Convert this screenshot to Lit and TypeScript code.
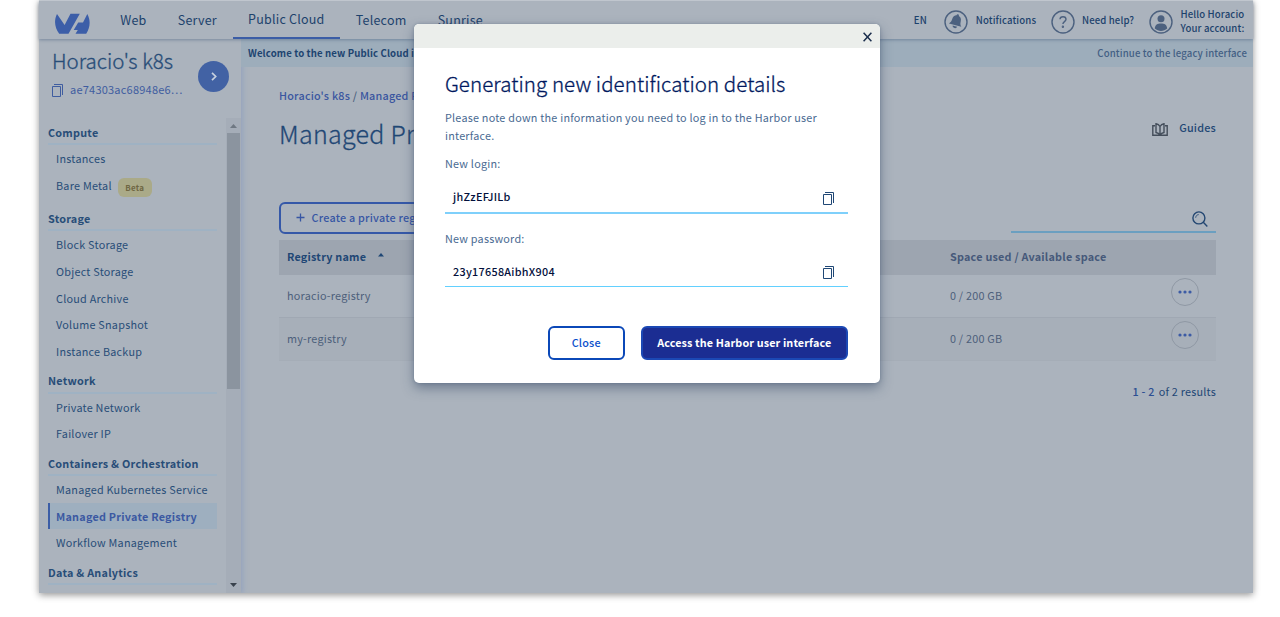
import { LitElement, html, css, nothing } from "lit";
import { customElement } from "lit/decorators.js";
import { classMap } from "lit/directives/class-map.js";

const base = css`
  *, *::before { box-sizing: border-box; }
  svg { display: block; flex: none; }
`;

const copyIcon = html`<svg width="11" height="13" viewBox="0 0 11 13" fill="none" stroke="currentColor" stroke-width="1">
  <path d="M.5 2.5h8v10h-8zM2 .5h8.5V11" /></svg>`;

@customElement("top-bar")
class TopBar extends LitElement {
  static styles = [base, css`
    :host { display: flex; height: 39px; padding-left: 16px; color: #1d426c; position: relative;
      box-shadow: 0 1px 3px rgba(60, 85, 120, .45); font-size: 12.5px; letter-spacing: .22px; }
    .logo { margin: 12px 13.7px 0 0; }
    .tab { padding: 0 15.6px; line-height: 37px; height: 38px; white-space: nowrap; }
    .tab.active { line-height: 36px; border-bottom: 2px solid #3b5da6; }
    .tools { margin-left: auto; display: flex; align-items: center; height: 40px; padding-right: 10px;
      font-size: 9.6px; font-weight: 500; letter-spacing: .13px; line-height: 13.4px; white-space: nowrap; }
    .tools svg { color: #4c617f; margin-top: 1px; }
    .lang { width: 30.5px; }
    .bell { width: 74.7px; margin-left: 7.5px; }
    .help { width: 67px; margin-left: 7.5px; }
    .user { width: 62.5px; margin: -1px 0 0 7.5px; line-height: 14px; }
  `];
  render() {
    return html`
      <svg class="logo" width="36" height="22" viewBox="0 0 36 22" fill="#3c5ea8">
        <path d="M2 1 C-1.500 8 0 15 4.200 20.800 H13.500 L24.800 .8 H15.500 L9.600 12 Z" />
        <path d="M32.300 1 C36.200 8 34.800 15 31.200 20.800 H20.500 L22.800 17 H18.700 L23.200 9.500 H28 Z" />
      </svg>
      ${["Web", "Server", "Public Cloud", "Telecom", "Sunrise"].map(
        (t) => html`<div class=${classMap({ tab: true, active: t === "Public Cloud" })}>${t}</div>`)}
      <div class="tools">
        <div class="lang">EN</div>
        <svg width="24" height="24" viewBox="0 0 24 24">
          <circle cx="12" cy="12" r="11" fill="none" stroke="currentColor" stroke-width="1.400" />
          <g transform="rotate(15 12 12)" fill="currentColor">
            <path d="M12 5.200c-3 .2-4.400 2.300-4.400 5 0 2.500-.7 3.700-2 5h12.800c-1.300-1.300-2-2.500-2-5 0-2.700-1.400-4.800-4.400-5z" />
            <circle cx="12" cy="5.300" r="1.200" /><path d="M9.700 16.300h4.600a2.300 2 0 0 1-4.600 0z" /></g>
        </svg>
        <div class="bell">Notifications</div>
        <svg width="24" height="24" viewBox="0 0 24 24" fill="none" stroke="currentColor" stroke-width="1.400">
          <circle cx="12" cy="12" r="11" /><path d="M9 9.200c.2-3.400 6-3.300 6 .1 0 2.300-3.100 2.300-3.100 4.700" />
          <circle cx="11.900" cy="16.800" r=".5" />
        </svg>
        <div class="help">Need help?</div>
        <svg width="24" height="24" viewBox="0 0 24 24" fill="currentColor">
          <circle cx="12" cy="12" r="11" fill="none" stroke="currentColor" stroke-width="1.400" />
          <circle cx="12" cy="8.800" r="3.500" /><path d="M5.800 18.500c.2-3.700 2.700-5 6.200-5s6 1.300 6.200 5c-3.500 3.200-8.900 3.200-12.400 0z" />
        </svg>
        <div class="user">Hello Horacio<br />Your account:</div>
      </div>`;
  }
}

@customElement("side-nav")
class SideNav extends LitElement {
  static styles = [base, css`
    :host { display: block; width: 202px; flex: none; box-shadow: 2px 0 5px rgba(130, 150, 190, .55); overflow: hidden; color: #284d78; }
    .project { display: flex; align-items: center; height: 77px; padding: 0 12px 13px 13px; justify-content: space-between; }
    .name { font-size: 20.5px; font-weight: 300; -webkit-text-stroke: .3px; letter-spacing: 0; line-height: 36px; }
    .id { display: flex; align-items: center; gap: 7px; line-height: 22px; color: #3f5da0; font-size: 11px; letter-spacing: .22px; white-space: nowrap; }
    .id svg { margin-top: 2px; }
    .go { width: 31px; height: 31px; border-radius: 50%; background: #4262a4; color: #c6d0de; display: grid; place-items: center; margin-top: 11px; }
    .scroll { display: flex; height: 477px; }
    .list { flex: 1; padding: .4px 9px 0 9px; height: 477px; overflow: hidden; letter-spacing: .25px; }
    .head { height: 28.6px; padding-top: 3.4px; line-height: 24px; border-bottom: 2px solid #9fb2c3; font-weight: 700; }
    .item { height: 26.8px; line-height: 26.8px; padding-left: 8px; white-space: nowrap; display: flex; }
    .item.badged { height: 30.7px; }
    .item.active { border-left: 2px solid #3b5da6; padding-left: 6px; background: #9eafbf; color: #3b59a2; font-weight: 700; }
    .badge { margin: 6px 0 0 6px; width: 34px; height: 19px; border-radius: 6px; background: #aaaa88; color: #6f6743;
      font-size: 8px; font-weight: 700; line-height: 19px; text-align: center; }
    .bar { width: 15px; height: 475px; margin-top: 2px; background: #a5adb8; display: flex; flex-direction: column; align-items: center; }
    .bar svg { margin: 5px 0 5px; }
    .thumb { width: 13.5px; height: 256px; background: #8b949f; }
    .bar svg.down { margin: auto 0 5px; }
  `];
  groups: [string, string[]][] = [
    ["Compute", ["Instances", "Bare Metal"]],
    ["Storage", ["Block Storage", "Object Storage", "Cloud Archive", "Volume Snapshot", "Instance Backup"]],
    ["Network", ["Private Network", "Failover IP"]],
    ["Containers & Orchestration", ["Managed Kubernetes Service", "Managed Private Registry", "Workflow Management"]],
    ["Data & Analytics", []],
  ];
  render() {
    return html`
      <div class="project">
        <div>
          <div class="name">Horacio's k8s</div>
          <div class="id">${copyIcon}ae74303ac68948e6…</div>
        </div>
        <div class="go"><svg width="6" height="9" viewBox="0 0 6 9" fill="none" stroke="currentColor" stroke-width="1.700"><path d="M1 .8 4.700 4.500 1 8.200" /></svg></div>
      </div>
      <div class="scroll">
        <div class="list">
          ${this.groups.map(([head, items]) => html`
            <div class="head">${head}</div>
            ${items.map((i) => html`<div class=${classMap({ item: true, active: i === "Managed Private Registry", badged: i === "Bare Metal" })}>
              ${i}${i === "Bare Metal" ? html`<span class="badge">Beta</span>` : nothing}</div>`)}`)}
        </div>
        <div class="bar">
          <svg width="7" height="5" fill="#6f7883"><path d="M0 5 3.500 1 7 5z" /></svg>
          <div class="thumb"></div>
          <svg class="down" width="7" height="5" fill="#39424d"><path d="M0 0h7L3.500 4z" /></svg>
        </div>
      </div>`;
  }
}

@customElement("registry-page")
class RegistryPage extends LitElement {
  static styles = [base, css`
    :host { display: block; flex: 1; min-width: 0; color: #1f4775; }
    .banner { height: 28px; line-height: 28px; padding: 0 6px 0 7px; background: #9dadbb; display: flex; justify-content: space-between;
      font-size: 9.6px; letter-spacing: .13px; font-weight: 700; color: #1d4470; white-space: nowrap; }
    .legacy { font-weight: 500; letter-spacing: .14px; color: #435f84; }
    .body { padding: 18px 37px 0 38px; }
    .crumbs { line-height: 20px; font-weight: 500; color: #3a56a0; white-space: nowrap; }
    .sep { color: #4a5e7c; }
    .title { display: flex; justify-content: space-between; align-items: flex-start; height: 97px; white-space: nowrap; }
    h1 { margin: 8px 0 0; font-size: 25px; font-weight: 300; -webkit-text-stroke: .3px; line-height: 40px; letter-spacing: .28px; }
    .guides { display: flex; gap: 11px; align-items: center; line-height: 20px; margin-top: 12px; font-weight: 500; }
    .guides svg { margin-top: 4px; }
    .actions { display: flex; justify-content: space-between; height: 38px; }
    .create { height: 32px; width: 200px; border: 2px solid #3558a8; border-radius: 6px; padding: 0 0 2px 15px; line-height: 26px;
      color: #3756a4; font-weight: 500; display: flex; gap: 6.5px; align-items: center; white-space: nowrap; }
    .create svg { margin-top: 1px; }
    .search { width: 205px; height: 31px; border-bottom: 2px solid #6b9fc0; display: flex; justify-content: flex-end; padding: 9px 8.500px 0 0; }
    .row { display: grid; grid-template-columns: 663px 1fr 62px; padding-left: 8px; line-height: 41px; height: 43px; color: #4d607b; }
    .row.th { height: 35px; line-height: 33px; background: #9da5b0; color: #46597a; font-weight: 700; }
    .row.th .key { color: #1f4775; display: flex; align-items: center; gap: 12px; height: 33px; }
    .row.th svg { margin-bottom: 3px; }
    .row.td { border-bottom: 1px solid #a0a8b3; }
    .row.even { background: #a7afb9; border-color: #a5adb7; }
    .more { width: 28px; height: 28px; margin: 3px 0 0 16.500px; border: 1px solid #8f98a4; border-radius: 50%; color: #3c5ba5; display: grid; place-items: center; }
    .results { margin-top: 20px; line-height: 20px; display: flex; justify-content: flex-end; gap: 4px; }
    .range { font-weight: 500; color: #2c4f93; }
  `];
  more = html`<div class="more"><svg width="14" height="4" fill="currentColor"><circle cx="2" cy="2" r="1.600" /><circle cx="7" cy="2" r="1.600" /><circle cx="12" cy="2" r="1.600" /></svg></div>`;
  render() {
    return html`
      <div class="banner"><span>Welcome to the new Public Cloud interface</span><span class="legacy">Continue to the legacy interface</span></div>
      <div class="body">
        <div class="crumbs">Horacio's k8s <span class="sep">/</span> Managed Private Registry</div>
        <div class="title">
          <h1>Managed Private Registry</h1>
          <div class="guides">
            <svg width="16" height="13" viewBox="0 0 16 13" fill="none" stroke="#444e5b" stroke-width="1.400">
              <path d="M3 2.700H.8v9.500h14.400V2.700H13M8 12V3.500C7 1.900 5.800 1.200 4 .8v8.700c1.500.2 3 .9 4 2.500 1-1.600 2.500-2.300 4-2.500V.8c-1.800.4-3 1.100-4 2.700" /></svg>
            Guides
          </div>
        </div>
        <div class="actions">
          <div class="create"><svg width="9" height="9" stroke="currentColor" stroke-width="1.300"><path d="M4.500 .5v8M.5 4.500h8" /></svg>Create a private registry</div>
          <div class="search"><svg width="16" height="17" viewBox="0 0 16 17" fill="none" stroke="#234772" stroke-width="1.400">
            <circle cx="6.900" cy="6.900" r="6" /><path d="m11.300 11.200 4 4.200" /><path d="M3.700 6.700c.1-1.700 1.300-3 3-3.100" stroke-width=".9" /></svg></div>
        </div>
        <div class="row th"><span class="key">Registry name <svg width="6" height="4" fill="currentColor"><path d="M0 3.500 3 0l3 3.500z" /></svg></span><span>Space used / Available space</span></div>
        <div class="row td"><span>horacio-registry</span><span>0 / 200 GB</span>${this.more}</div>
        <div class="row td even"><span>my-registry</span><span>0 / 200 GB</span>${this.more}</div>
        <div class="results"><span class="range">1 - 2</span><span>of 2 results</span></div>
      </div>`;
  }
}

@customElement("credentials-dialog")
class CredentialsDialog extends LitElement {
  static styles = [base, css`
    :host { display: block; width: 465.5px; height: 359px; background: #fff; border-radius: 5px; overflow: hidden;
      box-shadow: 0 5px 12px rgba(50, 70, 100, .5), 0 0 3px rgba(50, 70, 100, .3); color: #4a6a92; }
    .bar { height: 24px; background: #ebeeeb; display: flex; justify-content: flex-end; padding: 8px 8px 0 0; }
    .content { padding: 18px 31.5px 0 31px; }
    h2 { margin: 0; font-size: 20.5px; font-weight: 300; -webkit-text-stroke: .3px; letter-spacing: .07px; line-height: 34px; color: #00185e; white-space: nowrap; }
    p { margin: 8px 0 0; line-height: 18.4px; letter-spacing: .23px; }
    .label { line-height: 18px; margin-top: 9px; }
    .field { height: 42px; border-bottom: 2px solid #7fd0fb; padding: 8.500px 14px 0 8px; margin-bottom: 15px; display: flex; justify-content: space-between;
      align-items: center; color: #03103c; font-weight: 500; letter-spacing: .3px; line-height: 26px; }
    .field.thin { border-bottom: 1px solid #62d0ff; height: 40px; margin-bottom: 0; }
    .field svg { color: #1f4775; margin-top: 4px; }
    .buttons { display: flex; justify-content: flex-end; gap: 15.5px; margin-top: 39px; }
    .btn { height: 34px; line-height: 29px; border: 2px solid #0b48b8; border-radius: 6px; width: 77.500px; text-align: center; color: #0b50cc; font-weight: 500; white-space: nowrap; }
    .btn.primary { width: 207.5px; background: #1b2d92; border-color: #1b48b4; color: #fff; font-weight: 700; letter-spacing: .12px; }
  `];
  render() {
    return html`
      <div class="bar"><svg width="9" height="10" stroke="#1c2f4d" stroke-width="1.500"><path d="M.6 .8 8.400 9.200M8.400 .8 .6 9.200" /></svg></div>
      <div class="content">
        <h2>Generating new identification details</h2>
        <p>Please note down the information you need to log in to the Harbor user interface.</p>
        <div class="label">New login:</div>
        <div class="field">jhZzEFJILb${copyIcon}</div>
        <div class="label">New password:</div>
        <div class="field thin">23y17658AibhX904${copyIcon}</div>
        <div class="buttons"><div class="btn">Close</div><div class="btn primary">Access the Harbor user interface</div></div>
      </div>`;
  }
}

@customElement("app-root")
class AppRoot extends LitElement {
  static styles = [base, css`
    :host { display: block; height: 617px; padding-left: 39px; background: #fff; overflow: hidden;
      font-family: "Noto Sans CJK SC", "Noto Sans", sans-serif; font-size: 10.8px; letter-spacing: .23px; }
    .window { position: relative; width: 1214px; height: 593px; background: #abb3bd; border-top: 1px solid #ccd0d5;
      box-shadow: 0 2px 7px rgba(0, 0, 0, .42); }
    top-bar { height: 38px; z-index: 1; }
    .main { display: flex; height: 554px; overflow: hidden; }
    .modal { position: absolute; left: 375px; top: 23px; z-index: 2; }
  `];
  render() {
    return html`<div class="window">
      <top-bar></top-bar>
      <div class="main"><side-nav></side-nav><registry-page></registry-page></div>
      <credentials-dialog class="modal"></credentials-dialog>
    </div>`;
  }
}
